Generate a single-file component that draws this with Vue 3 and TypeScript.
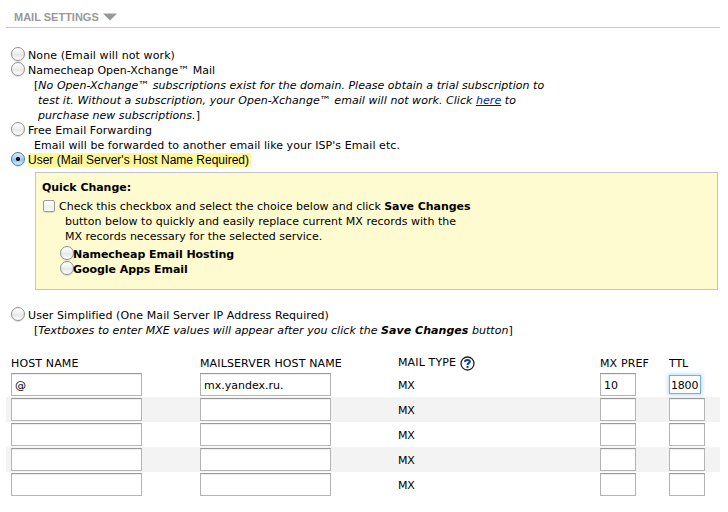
<script setup lang="ts">
import { ref } from 'vue'

interface MxRecord {
  host: string
  server: string
  pref: string
  ttl: string
  focused?: boolean
}

const mode = ref('user')
const service = ref('')
const quick = ref(false)

const records = ref<MxRecord[]>([
  { host: '@', server: 'mx.yandex.ru.', pref: '10', ttl: '1800', focused: true },
  { host: '', server: '', pref: '', ttl: '' },
  { host: '', server: '', pref: '', ttl: '' },
  { host: '', server: '', pref: '', ttl: '' },
  { host: '', server: '', pref: '', ttl: '' },
])
</script>

<template>
  <main class="page">
    <header class="title">
      <h1>MAIL SETTINGS</h1>
      <svg width="14" height="8" viewBox="0 0 14 8"><path d="M0 .5h14L7 7.5z" fill="#999" /></svg>
    </header>

    <section class="options">
      <label class="option">
        <input v-model="mode" type="radio" name="mode" value="none" />
        <span class="wide">None (Email will not work)</span>
      </label>
      <label class="option">
        <input v-model="mode" type="radio" name="mode" value="ox" />
        <span>Namecheap Open-Xchange™ Mail</span>
      </label>
      <div class="note">
        <div class="line first">[<i>No Open-Xchange™ subscriptions exist for the domain. Please obtain a trial subscription to</i></div>
        <div class="line hang second"><i>test it. Without a subscription, your Open-Xchange™ email will not work. Click <a href="#">here</a> to</i></div>
        <div class="line hang first"><i>purchase new subscriptions.</i>]</div>
      </div>
      <label class="option">
        <input v-model="mode" type="radio" name="mode" value="forward" />
        <span class="wide">Free Email Forwarding</span>
      </label>
      <div class="note"><div class="line medium">Email will be forwarded to another email like your ISP's Email etc.</div></div>
      <label class="option">
        <input v-model="mode" type="radio" name="mode" value="user" />
        <span class="selected">User (Mail Server's Host Name Required)</span>
      </label>
    </section>

    <section class="panel">
      <h2>Quick Change:</h2>
      <label class="check">
        <input v-model="quick" type="checkbox" />
        <span>Check this checkbox and select the choice below and click <b>Save Changes</b></span>
      </label>
      <div class="continued">
        <div class="line button-line">button below to quickly and easily replace current MX records with the</div>
        <div class="line">MX records necessary for the selected service.</div>
      </div>
      <div class="services">
        <label class="option">
          <input v-model="service" type="radio" name="service" value="namecheap" />
          <b>Namecheap Email Hosting</b>
        </label>
        <label class="option">
          <input v-model="service" type="radio" name="service" value="google" />
          <b>Google Apps Email</b>
        </label>
      </div>
    </section>

    <section class="simplified">
      <label class="option">
        <input v-model="mode" type="radio" name="mode" value="simple" />
        <span class="wide">User Simplified (One Mail Server IP Address Required)</span>
      </label>
      <div class="note"><div class="line textboxes">[<i>Textboxes to enter MXE values will appear after you click the <b>Save Changes</b> button</i>]</div></div>
    </section>

    <section class="records">
      <div class="row head">
        <span>HOST NAME</span>
        <span>MAILSERVER HOST NAME</span>
        <span class="type">
          <span class="type-label">MAIL TYPE</span>
          <svg width="15" height="15" viewBox="0 0 15 15">
            <circle cx="7.5" cy="7.5" r="6.5" fill="#fff" stroke="#222" stroke-width="1.3" />
            <path d="M5.1 6V5.6C5.1 3.5 9.8 3.4 9.8 5.7C9.8 7.2 7.5 7 7.5 8.9" fill="none" stroke="#0b3ea0" stroke-width="2" />
            <path d="M6.5 10h2v1.9h-2z" fill="#0b3ea0" />
          </svg>
        </span>
        <span>MX PREF</span>
        <span class="ttl-label">TTL</span>
      </div>
      <div v-for="(record, i) in records" :key="i" class="row" :class="{ striped: i % 2 === 1 }">
        <input v-model="record.host" class="text" type="text" />
        <input v-model="record.server" class="text" type="text" />
        <span class="mx">MX</span>
        <input v-model="record.pref" class="text small" type="text" />
        <input v-model="record.ttl" class="text small" :class="{ focused: record.focused }" type="text" />
      </div>
    </section>
  </main>
</template>

<style>
body {
  background: #fff;
}
</style>

<style scoped>
.page {
  box-sizing: border-box;
  width: 728px;
  height: 512px;
  padding: 10px 8px 0 6px;
  overflow: hidden;
  color: #000;
  font: 11px/15px 'DejaVu Sans', sans-serif;
}
.title {
  display: flex;
  align-items: center;
  gap: 4px;
  box-sizing: border-box;
  height: 18px;
  padding: 0 0 3px 8px;
  border-bottom: 1px solid #c8c8c8;
}
h1 {
  margin: 0;
  color: #999;
  font: bold 11px/14px 'Liberation Sans', sans-serif;
}
.options {
  padding: 19px 0 0 5px;
}
.option {
  display: flex;
  align-items: center;
  height: 15px;
  gap: 3px;
  white-space: nowrap;
}
.option span,
.option b {
  position: relative;
  top: 1px;
}
.line {
  height: 15px;
  white-space: nowrap;
  position: relative;
  top: 1px;
}
input[type='radio'] {
  appearance: none;
  box-sizing: border-box;
  flex: none;
  width: 14px;
  height: 14px;
  margin: 0 0 2px;
  border: 1px solid #929292;
  border-radius: 50%;
  background: linear-gradient(#fff, #eee 50%, #e6e6e6 55%, #fff);
  box-shadow: 0 1px 1px rgba(0, 0, 0, 0.15);
}
input[type='radio']:checked {
  border-color: #55779f;
  background: radial-gradient(circle, #111 0 1.8px, transparent 2.4px),
    linear-gradient(#dcebfb, #a5cef5 50%, #90c2f2 55%, #d2f0ff);
}
.wide {
  letter-spacing: 0.092px;
}
.note {
  padding-left: 23px;
}
.hang {
  padding-left: 4px;
}
.first {
  letter-spacing: 0.031px;
}
.second {
  letter-spacing: 0.05px;
}
.medium {
  letter-spacing: 0.066px;
}
.textboxes {
  letter-spacing: 0.04px;
}
a {
  color: #001c96;
}
.option .selected {
  top: 0;
  padding-right: 2px;
  background: #fff799;
  font: 12px/14px 'Liberation Sans', sans-serif;
}
.panel {
  box-sizing: border-box;
  width: 683px;
  height: 118px;
  margin: 5px 0 0 29px;
  padding: 7px 6px 0;
  border: 1px solid #c4c4c4;
  background: #fffbd0;
}
h2 {
  margin: 0;
  font: inherit;
  font-weight: bold;
  letter-spacing: -0.04px;
}
.check {
  display: flex;
  align-items: center;
  height: 15px;
  margin-top: 4px;
  gap: 4px;
  white-space: nowrap;
  letter-spacing: -0.01px;
}
.check b {
  letter-spacing: -0.06px;
}
input[type='checkbox'] {
  appearance: none;
  box-sizing: border-box;
  width: 12px;
  height: 12px;
  margin: 0 0 2px 1px;
  border: 1px solid #9b9b9b;
  border-radius: 2px;
  background: linear-gradient(#fff, #eee 60%, #fff);
  box-shadow: 0 1px 1px rgba(0, 0, 0, 0.12);
}
.continued {
  padding-left: 23px;
}
.continued .line {
  top: 0;
}
.button-line {
  letter-spacing: 0.022px;
}
.services {
  padding: 2px 0 0 18px;
}
.services .option {
  gap: 0;
  letter-spacing: -0.05px;
}
.services b {
  margin-left: -1px;
}
.simplified {
  padding: 17px 0 0 5px;
}
.records {
  padding-top: 18px;
}
.row {
  display: grid;
  grid-template-columns: 189px 198px 202px 69px 51px;
  align-items: center;
  box-sizing: border-box;
  height: 25px;
  padding-left: 5px;
}
.row.striped {
  background: #f3f3f3;
}
.row.head {
  height: 17px;
  letter-spacing: 0.13px;
}
.type {
  display: flex;
  align-items: center;
  gap: 4px;
}
.type-label {
  padding-bottom: 2px;
}
.ttl-label {
  letter-spacing: -0.12px;
}
.mx {
  padding-top: 2px;
  letter-spacing: -0.2px;
}
.text {
  box-sizing: border-box;
  width: 131px;
  height: 23px;
  margin: 0;
  padding: 1px 3px 0;
  border: 1px solid #b4b4b4;
  border-top-color: #999;
  border-radius: 0;
  outline: 0;
  background: #fff;
  box-shadow: inset 0 1px 1px #eee;
  color: #000;
  font: inherit;
}
.text.small {
  width: 36px;
}
.text.focused {
  width: 32px;
  height: 19px;
  padding: 1px 0 0 1px;
  border-color: #74aee3;
  box-shadow: 0 0 4px 1px #b5dcff;
  letter-spacing: -0.2px;
}
</style>
